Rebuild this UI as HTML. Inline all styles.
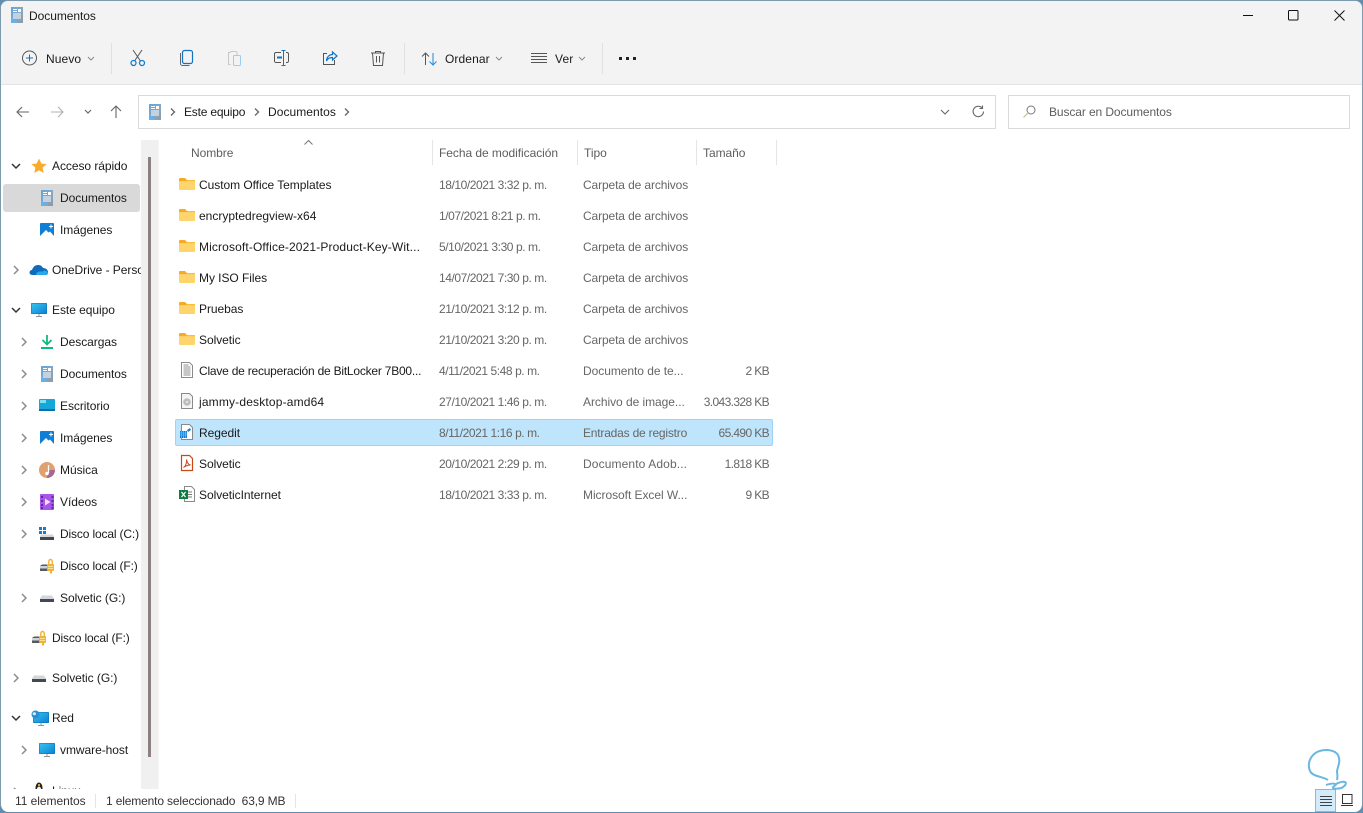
<!DOCTYPE html>
<html lang="es"><head><meta charset="utf-8"><title>Documentos</title>
<style>
html,body{margin:0;padding:0;width:1363px;height:813px;overflow:hidden;background:#5f8fb0}
*{box-sizing:border-box}
#w{position:absolute;left:0;top:0;width:1363px;height:812px;background:#fff;border-radius:8px;border:1px solid #7d99ad;border-bottom:0;overflow:hidden;font:12px "Liberation Sans",sans-serif;color:#1a1a1a}
#r{position:absolute;left:-1px;top:-1px;width:1363px;height:812px}
#r>*{position:absolute}
.t{white-space:nowrap;line-height:16px;height:16px;letter-spacing:-.05px}
.g{color:#666}
.s{color:#5d5d5d}
.d{letter-spacing:-.43px}
.c{letter-spacing:-.12px}
.n{letter-spacing:-.62px;width:100px;text-align:right;left:669px}
svg{overflow:visible}
.ic{width:16px;height:16px}
</style></head><body>
<svg width="0" height="0" style="position:absolute">
<defs>
<linearGradient id="dg" x1="0" y1="0" x2="1" y2="1"><stop offset="0" stop-color="#5ea6de"/><stop offset=".55" stop-color="#86a7c4"/><stop offset="1" stop-color="#8d9aa3"/></linearGradient>
<linearGradient id="mg" x1="0" y1="0" x2="1" y2="1"><stop offset="0" stop-color="#38c6f2"/><stop offset="1" stop-color="#0a7fd0"/></linearGradient>
<symbol id="doc" viewBox="0 0 12 16" preserveAspectRatio="none"><path d="M0 0h12v16H0z" fill="url(#dg)"/><path d="M0 16V9l7 7z" fill="#69b0e6"/><path d="M7 2h3v3H7z" fill="#fff"/><path d="M2 2.500h4M2 4.500h4M2 7h8M2 9h8M2 11h8" stroke="#fff" stroke-width="1"/></symbol>
<symbol id="img" viewBox="0 0 16 16"><rect x="1" y="1" width="14" height="14" rx="1" fill="#0f7fd6"/><path d="M1 14l6-6 2.500 2.500 1.500-1 4 4.500v1H1z" fill="#fff"/><path d="M12 2.500v4M10 4.500h4" stroke="#fff"/></symbol>
<symbol id="folder" viewBox="0 0 16 16"><path d="M0 3a1 1 0 0 1 1-1h5l2 2h7a1 1 0 0 1 1 1v2H0z" fill="#f7aa23"/><path d="M0 5h16v8a1 1 0 0 1-1 1H1a1 1 0 0 1-1-1z" fill="#fdd56c"/><path d="M0 5h7l1-1h8v1.200H0z" fill="#f9bd3f"/></symbol>
<symbol id="mon" viewBox="0 0 16 16"><rect x="0" y="1" width="16" height="11" rx="1" fill="url(#mg)"/><path d="M.5 1.500h15v10H.5z" fill="none" stroke="#0a6db5" stroke-opacity=".5"/><path d="M7.500 12h1v2h-1zM5 14h6v1H5z" fill="#8a99a5"/></symbol>
<symbol id="drive" viewBox="0 0 16 16"><path d="M3 5.500h10l2 3v3.500H1V8.500z" fill="#d3d7db"/><rect x="1" y="9" width="14" height="3" fill="#43484e"/></symbol>
<symbol id="lock" viewBox="0 0 16 16"><path d="M1 8l2-1.500h6V13H1z" fill="#555b61"/><path d="M1 8h7v2.500H1z" fill="#cfd3d7"/><rect x="8" y="6" width="7" height="7" rx="1" fill="#f3b232"/><path d="M9.800 6V3.200a1.700 1.700 0 0 1 3.400 0V6" stroke="#f3b232" fill="none" stroke-width="1.400"/><path d="M9 8.500h5M9 10.500h5" stroke="#fbe08f"/><path d="M11 13h2v2.500h-2z" fill="#f3b232"/></symbol>
<symbol id="chr" viewBox="0 0 8 10"><path d="M2 1l4 4-4 4" fill="none" stroke="#8c8c8c" stroke-width="1.500"/></symbol>
<symbol id="chd" viewBox="0 0 10 8"><path d="M1 2l4 4 4-4" fill="none" stroke="#333" stroke-width="1.500"/></symbol>
<symbol id="cap" viewBox="0 0 8 5"><path d="M1 1l3 3 3-3" fill="none" stroke="#8a8a8a"/></symbol>
<symbol id="bc" viewBox="0 0 6 10"><path d="M1 1.500L4.500 5 1 8.500" fill="none" stroke="#6a6a6a" stroke-width="1.400"/></symbol>
<symbol id="txt" viewBox="0 0 16 16"><path d="M2.500.5h8l3 3v12h-11z" fill="#fff" stroke="#8a8a8a"/><path d="M4.500 3h5M4.500 5h7M4.500 7h7M4.500 9h7M4.500 11h7M4.500 13h7" stroke="#8f8f8f"/></symbol>
</defs></svg>
<div id="w"><div id="r">
<!-- chrome -->
<div style="left:0;top:0;width:1363px;height:85px;background:#f3f3f3;border-bottom:1px solid #e3e3e3"></div>

<svg width="12" height="16" style="left:11px;top:7px"><use href="#doc" width="12" height="16"/></svg>
<div class="t" style="left:29px;top:8px">Documentos</div>

<svg width="12" height="12" style="left:1243px;top:12px"><path d="M0 3.500h10" stroke="#111" stroke-width="1"/></svg>
<svg width="12" height="12" style="left:1288px;top:10px"><rect x=".5" y=".5" width="9.500" height="9.500" rx="1" fill="none" stroke="#111"/></svg>
<svg width="12" height="12" style="left:1334px;top:10px"><path d="M.5.500l10 10M10.500.500l-10 10" stroke="#111" stroke-width="1"/></svg>

<!-- toolbar -->
<svg width="16" height="16" style="left:22px;top:50px"><circle cx="7.500" cy="8" r="7" fill="none" stroke="#555"/><path d="M7.500 4.500v7M4 8h7" stroke="#1a6fb8"/></svg>
<div class="t" style="left:46px;top:51px;letter-spacing:.1px">Nuevo</div>
<svg width="8" height="5" style="left:87px;top:56px"><use href="#cap"/></svg>
<div style="left:111px;top:43px;width:1px;height:31px;background:#e0e0e0"></div>

<svg width="16" height="18" style="left:130px;top:50px"><path d="M3 0l7.500 11M12 0L4.500 11" stroke="#555" fill="none"/><circle cx="3.500" cy="13" r="2.500" fill="none" stroke="#0f7fd6" stroke-width="1.300"/><circle cx="12" cy="13" r="2.500" fill="none" stroke="#0f7fd6" stroke-width="1.300"/></svg>
<svg width="14" height="16" style="left:180px;top:50px"><rect x="2.500" y=".5" width="10" height="13" rx="2" fill="none" stroke="#1173c4" stroke-width="1.200"/><path d="M.5 3v10.500a2 2 0 0 0 2 2h7" fill="none" stroke="#666"/></svg>
<svg width="16" height="16" style="left:227px;top:50px"><path d="M3.500 14.500h-2v-12h2M3 2.500C3 1 10 1 10 2.500V5" fill="none" stroke="#c8c8c8"/><rect x="6.500" y="5.500" width="7" height="10" rx="1" fill="none" stroke="#9ccdf2"/></svg>
<svg width="16" height="16" style="left:274px;top:50px"><path d="M7 2.500H2a1.500 1.500 0 0 0-1.500 1.500v7A1.500 1.500 0 0 0 2 12.500h5M12 2.500h1a1.500 1.500 0 0 1 1.500 1.500v7a1.500 1.500 0 0 1-1.500 1.500h-1" fill="none" stroke="#555"/><path d="M9.500 1v14M7.500.5h4M7.500 15.500h4" stroke="#1173c4"/><path d="M3 7.500h5" stroke="#1173c4" stroke-width="2"/></svg>
<svg width="16" height="16" style="left:322px;top:50px"><path d="M5 3.500H1.500v11h11V10" fill="none" stroke="#555"/><path d="M4.500 11c0-4 3-6.500 6-6.500V2l4.500 4-4.500 4V7.500c-3 0-5 1-6 3.500z" fill="none" stroke="#1173c4" stroke-width="1.200"/></svg>
<svg width="16" height="16" style="left:370px;top:50px"><path d="M1 3h14M5.500 3V1.500h5V3M2.500 3l1 12.500h9l1-12.500M6.500 6v6.500M9.500 6v6.500" fill="none" stroke="#555"/></svg>
<div style="left:404px;top:43px;width:1px;height:31px;background:#e0e0e0"></div>

<svg width="17" height="14" style="left:421px;top:52px"><path d="M4.500 13V1M1 4.500L4.500 1 8 4.500" fill="none" stroke="#555"/><path d="M12 1v12M8.500 9.500L12 13l3.500-3.500" fill="none" stroke="#1a8ae0"/></svg>
<div class="t" style="left:445px;top:51px;letter-spacing:.1px">Ordenar</div>
<svg width="8" height="5" style="left:495px;top:56px"><use href="#cap"/></svg>

<svg width="16" height="10" style="left:531px;top:53px"><path d="M0 .5h16M0 3.500h16M0 6.500h16M0 9.500h16" stroke="#555"/></svg>
<div class="t" style="left:555px;top:51px;letter-spacing:.1px">Ver</div>
<svg width="8" height="5" style="left:578px;top:56px"><use href="#cap"/></svg>
<div style="left:602px;top:43px;width:1px;height:31px;background:#e0e0e0"></div>
<svg width="17" height="3" style="left:619px;top:57px"><path d="M0 0h3v3H0zM7 0h3v3H7zM14 0h3v3h-3z" fill="#222"/></svg>

<!-- nav -->
<svg width="14" height="12" style="left:16px;top:106px"><path d="M13 6H1M6 1L1 6l5 5" fill="none" stroke="#666" stroke-width="1.100"/></svg>
<svg width="14" height="12" style="left:50px;top:106px"><path d="M1 6h12M8 1l5 5-5 5" fill="none" stroke="#b0b0b0" stroke-width="1.100"/></svg>
<svg width="8" height="5" style="left:84px;top:109px"><path d="M1 1l3 3 3-3" fill="none" stroke="#666" stroke-width="1.200"/></svg>
<svg width="12" height="14" style="left:110px;top:105px"><path d="M6 13V1M1 6l5-5 5 5" fill="none" stroke="#666" stroke-width="1.100"/></svg>

<div style="left:138px;top:95px;width:858px;height:34px;border:1px solid #dadada;border-width:1px 1.500px 1.500px 1px;background:#fff"></div>
<svg width="12" height="16" style="left:149px;top:104px"><use href="#doc" width="12" height="16"/></svg>
<svg width="6" height="10" style="left:170px;top:107px"><use href="#bc"/></svg>
<div class="t" style="left:184px;top:104px;letter-spacing:-.2px">Este equipo</div>
<svg width="6" height="10" style="left:254px;top:107px"><use href="#bc"/></svg>
<div class="t" style="left:268px;top:104px;letter-spacing:.05px">Documentos</div>
<svg width="6" height="10" style="left:344px;top:107px"><use href="#bc"/></svg>
<svg width="10" height="6" style="left:940px;top:109px"><path d="M1 1l4 4 4-4" fill="none" stroke="#666" stroke-width="1.100"/></svg>
<svg width="13" height="13" style="left:972px;top:105px"><path d="M11.500 6.500a5.200 5.200 0 1 1-1.600-3.800M10.500.500v3h-3" fill="none" stroke="#666" stroke-width="1.100"/></svg>

<div style="left:1008px;top:95px;width:342px;height:34px;border:1px solid #dadada;border-width:1px 1.500px 1.500px 1px;background:#fff"></div>
<svg width="13" height="13" style="left:1023px;top:105px"><circle cx="8" cy="5" r="4" fill="none" stroke="#777"/><path d="M5 8l-4.500 4.500" stroke="#b5c98f" stroke-width="1.200"/></svg>
<div class="t s" style="left:1049px;top:104px;letter-spacing:-.1px">Buscar en Documentos</div>

<!-- sidebar -->
<div style="left:141px;top:140px;width:17px;height:649px;background:#f0f0f0"></div>
<div style="left:148px;top:157px;width:3px;height:600px;background:#8c8080"></div>
<div style="left:158px;top:140px;width:1px;height:649px;background:#f5f5f5"></div>
<div style="left:3px;top:184px;width:137px;height:28px;background:#d9d9d9;border-radius:3px"></div>

<svg width="10" height="8" style="left:11px;top:162px"><use href="#chd"/></svg>
<svg width="16" height="16" style="left:31px;top:158px"><path d="M8 .5l2.300 5 5.200.600-3.900 3.500 1.100 5.400L8 12.300 3.300 15l1.100-5.400L.5 6.100l5.200-.6z" fill="#fbab2c"/></svg>
<div class="t" style="left:52px;top:158px">Acceso rápido</div>
<svg width="12" height="16" style="left:41px;top:190px"><use href="#doc" width="12" height="16"/></svg>
<div class="t" style="left:60px;top:190px">Documentos</div>
<svg class="ic" style="left:39px;top:222px"><use href="#img"/></svg>
<div class="t" style="left:60px;top:222px">Imágenes</div>

<svg width="8" height="10" style="left:12px;top:265px"><use href="#chr"/></svg>
<svg width="17" height="12" style="left:31px;top:264px"><path d="M1 11a2.500 2.500 0 0 1 0-5c1-3 3-5 6-5 2.500 0 4 1 5 3 3 0 5 2 5 4s-1 3-2 3z" fill="#0f6cbd"/><path d="M5 11c0-2 1.500-3.500 4-3.500 2 0 3 .5 4-1 2 0 4 1.500 4 2.500s-1 2-2 2z" fill="#28a8ea"/></svg>
<div class="t" style="left:52px;top:262px;width:89px;overflow:hidden">OneDrive - Personal</div>

<svg width="10" height="8" style="left:11px;top:306px"><use href="#chd"/></svg>
<svg class="ic" style="left:31px;top:302px"><use href="#mon"/></svg>
<div class="t" style="left:52px;top:302px">Este equipo</div>

<svg width="8" height="10" style="left:20px;top:337px"><use href="#chr"/></svg>
<svg class="ic" style="left:39px;top:334px"><path d="M8 1v9M3.500 6L8 10.500 12.500 6" fill="none" stroke="#10b981" stroke-width="1.800"/><path d="M2 14h12" stroke="#10b981" stroke-width="2"/></svg>
<div class="t" style="left:60px;top:334px">Descargas</div>

<svg width="8" height="10" style="left:20px;top:369px"><use href="#chr"/></svg>
<svg width="12" height="16" style="left:41px;top:366px"><use href="#doc" width="12" height="16"/></svg>
<div class="t" style="left:60px;top:366px">Documentos</div>

<svg width="8" height="10" style="left:20px;top:401px"><use href="#chr"/></svg>
<svg class="ic" style="left:39px;top:398px"><rect y="1" width="16" height="12" rx="1" fill="#14a7d8"/><path d="M1 2h6v3H1z" fill="#7fe0f5"/><path d="M0 11h16v2H0z" fill="#0b6fae"/></svg>
<div class="t" style="left:60px;top:398px">Escritorio</div>

<svg width="8" height="10" style="left:20px;top:433px"><use href="#chr"/></svg>
<svg class="ic" style="left:39px;top:430px"><use href="#img"/></svg>
<div class="t" style="left:60px;top:430px">Imágenes</div>

<svg width="8" height="10" style="left:20px;top:465px"><use href="#chr"/></svg>
<svg class="ic" style="left:39px;top:462px"><circle cx="8" cy="8" r="8" fill="#e0a070"/><path d="M8 16a8 8 0 0 0 8-8H9z" fill="#a9688f"/><path d="M9.500 3v8" stroke="#fff" stroke-width="1.300"/><circle cx="8" cy="11.500" r="1.800" fill="#fff"/></svg>
<div class="t" style="left:60px;top:462px">Música</div>

<svg width="8" height="10" style="left:20px;top:497px"><use href="#chr"/></svg>
<svg class="ic" style="left:39px;top:494px"><rect x="1" y="0" width="14" height="16" rx="1" fill="#a855e8"/><path d="M6 4.500l5.500 3.500L6 11.500z" fill="#f2ddff"/><path d="M2 2h2v2H2zM2 6h2v2H2zM2 10h2v2H2zM2 13h2v2H2zM12.500 2h2v2h-2zM12.500 6h2v2h-2zM12.500 10h2v2h-2zM12.500 13h2v2h-2z" fill="#5f2a99"/></svg>
<div class="t" style="left:60px;top:494px">Vídeos</div>

<svg width="8" height="10" style="left:20px;top:529px"><use href="#chr"/></svg>
<svg class="ic" style="left:39px;top:526px"><path d="M0 1h3v3H0zM4 1h3v3H4zM0 5h3v3H0zM4 5h3v3H4z" fill="#0f7fd6"/><path d="M2 8.500h12l1 2.500H1z" fill="#d3d7db"/><rect x="1" y="11" width="14" height="3" fill="#43484e"/></svg>
<div class="t" style="left:60px;top:526px;letter-spacing:-.15px">Disco local (C:)</div>

<svg class="ic" style="left:39px;top:558px"><use href="#lock"/></svg>
<div class="t" style="left:60px;top:558px;letter-spacing:-.15px">Disco local (F:)</div>

<svg width="8" height="10" style="left:20px;top:593px"><use href="#chr"/></svg>
<svg class="ic" style="left:39px;top:590px"><use href="#drive"/></svg>
<div class="t" style="left:60px;top:590px">Solvetic (G:)</div>

<svg class="ic" style="left:31px;top:630px"><use href="#lock"/></svg>
<div class="t" style="left:52px;top:630px;letter-spacing:-.15px">Disco local (F:)</div>

<svg width="8" height="10" style="left:12px;top:673px"><use href="#chr"/></svg>
<svg class="ic" style="left:31px;top:670px"><use href="#drive"/></svg>
<div class="t" style="left:52px;top:670px">Solvetic (G:)</div>

<svg width="10" height="8" style="left:11px;top:714px"><use href="#chd"/></svg>
<svg class="ic" style="left:31px;top:710px"><use href="#mon" x="2" y="1"/><circle cx="4.500" cy="4.500" r="4" fill="#2c8fd0"/><path d="M1.500 3.500c1.500-2 3-1.500 3.500 0s-1.500 2-3 1.500" fill="#cfeaff"/></svg>
<div class="t" style="left:52px;top:710px">Red</div>

<svg width="8" height="10" style="left:20px;top:745px"><use href="#chr"/></svg>
<svg class="ic" style="left:39px;top:742px"><use href="#mon"/></svg>
<div class="t" style="left:60px;top:742px">vmware-host</div>

<div style="left:0;top:778px;width:141px;height:11px;overflow:hidden">
<svg width="8" height="10" style="position:absolute;left:12px;top:9px"><use href="#chr"/></svg>
<svg width="12" height="14" style="position:absolute;left:33px;top:4px"><ellipse cx="6" cy="6" rx="3.500" ry="5.500" fill="#222"/><ellipse cx="6" cy="8" rx="2.200" ry="3.500" fill="#eee"/><path d="M5 2h2v2H5z" fill="#e8a020"/></svg>
<div class="t" style="position:absolute;left:52px;top:5px">Linux</div>
</div>

<!-- header -->
<svg width="9" height="5" style="left:304px;top:140px"><path d="M.5 4.500L4.500.5l4 4" fill="none" stroke="#777"/></svg>
<div class="t s" style="left:191px;top:145px">Nombre</div>
<div class="t s" style="left:439px;top:145px">Fecha de modificación</div>
<div class="t s" style="left:584px;top:145px">Tipo</div>
<div class="t s" style="left:703px;top:145px">Tamaño</div>
<div style="left:432px;top:140px;width:1px;height:25px;background:#e5e5e5"></div>
<div style="left:577px;top:140px;width:1px;height:25px;background:#e5e5e5"></div>
<div style="left:696px;top:140px;width:1px;height:25px;background:#e5e5e5"></div>
<div style="left:776px;top:140px;width:1px;height:25px;background:#e5e5e5"></div>

<div style="left:175px;top:419px;width:598px;height:27px;background:#bfe5fc;border:1px solid #9fd3f5;border-radius:2px"></div>

<!-- rows -->
<svg class="ic" style="left:179px;top:176px"><use href="#folder"/></svg>
<div class="t" style="left:199px;top:177px">Custom Office Templates</div>
<div class="t g d" style="left:439px;top:177px">18/10/2021 3:32 p. m.</div>
<div class="t g c" style="left:583px;top:177px">Carpeta de archivos</div>

<svg class="ic" style="left:179px;top:207px"><use href="#folder"/></svg>
<div class="t" style="left:199px;top:208px;letter-spacing:0">encryptedregview-x64</div>
<div class="t g d" style="left:439px;top:208px">1/07/2021 8:21 p. m.</div>
<div class="t g c" style="left:583px;top:208px">Carpeta de archivos</div>

<svg class="ic" style="left:179px;top:238px"><use href="#folder"/></svg>
<div class="t" style="left:199px;top:239px;letter-spacing:.13px">Microsoft-Office-2021-Product-Key-Wit...</div>
<div class="t g d" style="left:439px;top:239px">5/10/2021 3:30 p. m.</div>
<div class="t g c" style="left:583px;top:239px">Carpeta de archivos</div>

<svg class="ic" style="left:179px;top:269px"><use href="#folder"/></svg>
<div class="t" style="left:199px;top:270px">My ISO Files</div>
<div class="t g d" style="left:439px;top:270px">14/07/2021 7:30 p. m.</div>
<div class="t g c" style="left:583px;top:270px">Carpeta de archivos</div>

<svg class="ic" style="left:179px;top:300px"><use href="#folder"/></svg>
<div class="t" style="left:199px;top:301px">Pruebas</div>
<div class="t g d" style="left:439px;top:301px">21/10/2021 3:12 p. m.</div>
<div class="t g c" style="left:583px;top:301px">Carpeta de archivos</div>

<svg class="ic" style="left:179px;top:331px"><use href="#folder"/></svg>
<div class="t" style="left:199px;top:332px">Solvetic</div>
<div class="t g d" style="left:439px;top:332px">21/10/2021 3:20 p. m.</div>
<div class="t g c" style="left:583px;top:332px">Carpeta de archivos</div>

<svg class="ic" style="left:179px;top:362px"><use href="#txt"/></svg>
<div class="t" style="left:199px;top:363px;letter-spacing:-.22px">Clave de recuperación de BitLocker 7B00...</div>
<div class="t g d" style="left:439px;top:363px">4/11/2021 5:48 p. m.</div>
<div class="t g" style="left:583px;top:363px">Documento de te...</div>
<div class="t g n" style="top:363px">2 KB</div>

<svg class="ic" style="left:179px;top:393px"><path d="M2.500.5h8l3 3v12h-11z" fill="#f4f4f4" stroke="#8a8a8a"/><circle cx="8" cy="9" r="3.800" fill="#bdbdbd"/><circle cx="8" cy="9" r="1" fill="#eee"/></svg>
<div class="t" style="left:199px;top:394px;letter-spacing:.17px">jammy-desktop-amd64</div>
<div class="t g d" style="left:439px;top:394px">27/10/2021 1:46 p. m.</div>
<div class="t g" style="left:583px;top:394px">Archivo de image...</div>
<div class="t g n" style="top:394px">3.043.328 KB</div>

<svg class="ic" style="left:179px;top:424px"><path d="M2.500.5h8l3 3v12h-11z" fill="#fff" stroke="#8a8a8a"/><path d="M1 7h7v7H1z" fill="#0f7fd6"/><path d="M2.500 7v7M4.500 7v7M6.500 7v7M1 9h7M1 11h7" stroke="#8cc8f0" stroke-width=".6"/><path d="M8 6l3-2 1 2-3 2z" fill="#0f7fd6"/></svg>
<div class="t" style="left:199px;top:425px">Regedit</div>
<div class="t g d" style="left:439px;top:425px">8/11/2021 1:16 p. m.</div>
<div class="t g" style="left:583px;top:425px;letter-spacing:-.2px">Entradas de registro</div>
<div class="t g n" style="top:425px">65.490 KB</div>

<svg class="ic" style="left:179px;top:455px"><path d="M2.500.5h8l3 3v12h-11z" fill="#fff" stroke="#c8481c" stroke-width="1.200"/><path d="M4.500 12.500c2-1 3.500-5 3-8 .5 3 2 5 4 5.500-2 0-5 1-7 2.500z" fill="none" stroke="#c8481c"/></svg>
<div class="t" style="left:199px;top:456px">Solvetic</div>
<div class="t g d" style="left:439px;top:456px">20/10/2021 2:29 p. m.</div>
<div class="t g" style="left:583px;top:456px;letter-spacing:.12px">Documento Adob...</div>
<div class="t g n" style="top:456px">1.818 KB</div>

<svg class="ic" style="left:179px;top:486px"><path d="M5.500.5h7l3 3v12h-10z" fill="#fff" stroke="#8a8a8a"/><path d="M9 6h4M9 8.500h4M9 11h4" stroke="#777"/><rect x="0" y="4" width="9" height="9" fill="#107c41"/><path d="M2.500 6l4 5M6.500 6l-4 5" stroke="#fff" stroke-width="1.200"/></svg>
<div class="t" style="left:199px;top:487px">SolveticInternet</div>
<div class="t g d" style="left:439px;top:487px">18/10/2021 3:33 p. m.</div>
<div class="t g" style="left:583px;top:487px">Microsoft Excel W...</div>
<div class="t g n" style="top:487px">9 KB</div>

<!-- status -->
<div class="t" style="left:15px;top:793px;color:#333">11 elementos</div>
<div style="left:95px;top:794px;width:1px;height:14px;background:#e5e5e5"></div>
<div class="t" style="left:106px;top:793px;color:#333;letter-spacing:-.15px">1 elemento seleccionado&nbsp; 63,9 MB</div>
<div style="left:295px;top:794px;width:1px;height:14px;background:#e5e5e5"></div>

<!-- watermark + view buttons -->
<div style="left:1315px;top:789px;width:21px;height:23px;background:#d3ecfb;border:1px solid #6cc5ef"></div>
<svg width="14" height="10" style="left:1320px;top:796px"><path d="M0 .5h12M0 3.500h12M0 6.500h12M0 9.500h12" stroke="#444"/></svg>
<svg width="14" height="12" style="left:1341px;top:794px"><path d="M1.500.5h9.500v9H1.500z" fill="#fff" stroke="#333"/><path d="M0 11.500h12" stroke="#333"/></svg>
<svg width="36" height="40" style="left:1306px;top:750px"><path d="M22 30c-6-4-15-3-18-9C1 14 4 6 11 2c7-3 17-3 21 3 3 6 0 11-1 16 0 3 1 5 0 9M20 35c3-1 7-2 9-1 3 1-3 2-2 4 1 1 8 1 10-1 2-1 4-4 2-5-3-1-7 1-9 2" fill="none" stroke="#6cb6e2" stroke-width="2"/></svg>
</div></div>
</body></html>
